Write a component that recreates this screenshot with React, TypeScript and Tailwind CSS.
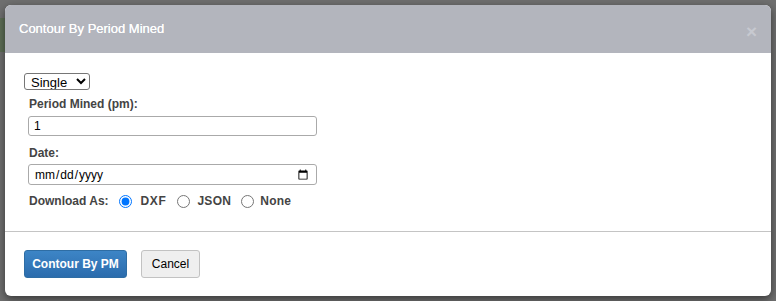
export default function App() {
  return (
    <div
      className="w-[776px] h-[301px] bg-[#6f6f6f] pt-[5px] pl-[5px] overflow-hidden relative"
      style={{ fontFamily: '"Liberation Sans", Arial, sans-serif' }}
    >
      {/* page content peeking from behind */}
      <div className="absolute left-0 top-[18px] w-[5px] h-[34px] bg-[#5d6e55]" />

      <div className="relative w-[766px] h-[291px] bg-white rounded-[6px] overflow-hidden flex flex-col shadow-[0_3px_9px_rgba(0,0,0,0.5)]">
        {/* Header */}
        <div className="h-[48px] bg-[#b3b5bd] flex items-center justify-between pl-[14px] pr-[14px] shrink-0">
          <h4 className="text-[13px] font-normal text-white [text-shadow:0_0_0.5px_#fff]">Contour By Period Mined</h4>
          <span className="text-[#c7c9d0] text-[19px] font-bold leading-none mt-[5px]">×</span>
        </div>

        {/* Body */}
        <div className="pl-[19px] pt-[20px] h-[178px] text-[12px] text-[#444]">
          <select className="h-[17px] w-[66px] border border-[#767676] rounded-[3px] text-[13px] text-black pl-[2px] bg-white">
            <option>Single</option>
            <option>Multiple</option>
          </select>

          <div className="ml-[4px]">
            <label className="block font-bold mt-[5px] ml-[1px] leading-[14px]">Period Mined (pm):</label>
            <input
              type="text"
              defaultValue="1"
              className="block mt-[5px] w-[289px] h-[20px] border border-[#aaa] rounded-[3px] px-[5px] text-[12px] text-black"
            />

            <label className="block font-bold mt-[10px] ml-[1px] leading-[14px]">Date:</label>
            <input
              type="date"
              className="block mt-[4px] w-[289px] h-[21px] border border-[#aaa] rounded-[3px] px-[5px] text-[12px] text-black"
            />

            <div className="flex items-center mt-[9px] ml-[1px] font-bold leading-[14px]">
              <span className="mr-[10px]">Download As:</span>
              <input type="radio" name="dl" defaultChecked className="w-[13px] h-[13px] m-0 mr-[9px] accent-[#0075ff]" />
              <span className="mr-[11px] tracking-[0.6px]">DXF</span>
              <input type="radio" name="dl" className="w-[13px] h-[13px] m-0 mr-[7px]" />
              <span className="mr-[10px] tracking-[0.3px]">JSON</span>
              <input type="radio" name="dl" className="w-[13px] h-[13px] m-0 mr-[6px]" />
              <span className="tracking-[0.2px]">None</span>
            </div>
          </div>
        </div>

        {/* Footer */}
        <div className="border-t border-[#c4c4c4] pl-[19px] pt-[18px] flex gap-[14px]">
          <button className="h-[28px] w-[103px] rounded-[3px] border border-[#2e6da4] bg-gradient-to-b from-[#3d85c6] to-[#2b6cad] text-white font-bold text-[12px]">
            Contour By PM
          </button>
          <button className="h-[28px] w-[59px] rounded-[3px] border border-[#c2c2c2] bg-[#efefef] text-black text-[12px]">
            Cancel
          </button>
        </div>
      </div>
    </div>
  )
}
